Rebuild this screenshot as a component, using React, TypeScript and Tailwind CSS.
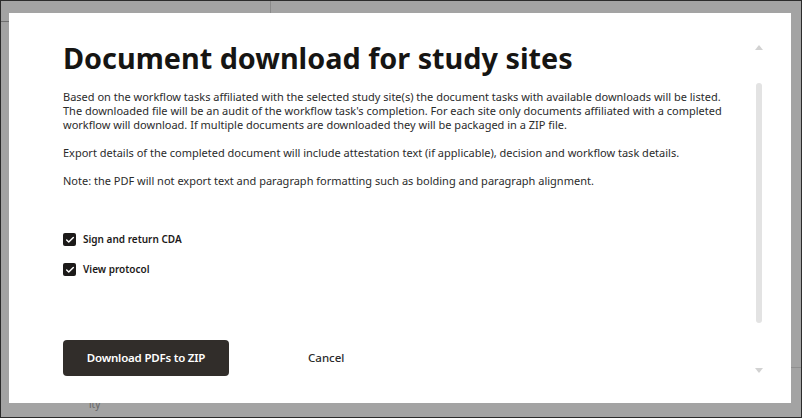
import { Check } from 'lucide-react';

const font = { fontFamily: '"Noto Sans", "Open Sans", Arial, sans-serif' };

const paragraphs = [
  "Based on the workflow tasks affiliated with the selected study site(s) the document tasks with available downloads will be listed. The downloaded file will be an audit of the workflow task's completion. For each site only documents affiliated with a completed workflow will download. If multiple documents are downloaded they will be packaged in a ZIP file.",
  'Export details of the completed document will include attestation text (if applicable), decision and workflow task details.',
  'Note: the PDF will not export text and paragraph formatting such as bolding and paragraph alignment.',
];

const tasks = ['Sign and return CDA', 'View protocol'];

function Scrollbar() {
  return (
    <div className="flex h-full w-[12px] flex-col items-center pt-[32px] pb-[30px]">
      <div className="h-0 w-0 border-x-[4px] border-b-[5px] border-x-transparent border-b-[#d2d2d2]" />
      <div className="mt-[33px] w-[6px] flex-1 rounded-full bg-[#e3e3e3]" />
      <div className="mt-[45px] h-0 w-0 border-x-[4px] border-t-[5px] border-x-transparent border-t-[#d2d2d2]" />
    </div>
  );
}

export default function App() {
  return (
    <div
      className="relative h-[418px] w-[802px] overflow-hidden border border-[#2b2b2b] bg-[#a3a3a3] pl-[8px] pt-[12px]"
      style={font}
    >
      {/* page behind the overlay */}
      <div className="absolute left-0 top-[20px] h-px w-[9px] bg-[#6e6e6e]" />
      <div className="absolute left-[269px] top-0 h-[12px] w-px bg-[#8a8a8a]" />
      <div className="absolute right-0 top-[366px] h-px w-[10px] bg-[#8f8f8f]" />
      <span className="absolute left-[88px] top-[396px] text-[10px] text-[#666]">ity</span>

      <div className="relative flex h-[390px] w-[782px] bg-white">
        <div className="flex flex-1 flex-col pl-[54px] pr-[30px] pt-[26px]">
          <h1 className="text-[28.8px] font-bold leading-[38px] text-[#161513]">
            Document download for study sites
          </h1>
          <div className="mt-[13px] flex flex-col gap-[14px] text-[11px] leading-[14px] text-[#2b2b2b]">
            {paragraphs.map((p) => (
              <p key={p}>{p}</p>
            ))}
          </div>

          <div className="mt-[45px] flex flex-col gap-[17px]">
            {tasks.map((t) => (
              <label key={t} className="flex items-center gap-[7px]">
                <span className="flex h-[13px] w-[13px] items-center justify-center rounded-[2px] bg-[#1c1a19]">
                  <Check size={10} strokeWidth={3.5} className="text-white" />
                </span>
                <span className="text-[10px] font-semibold leading-[13px] text-[#1c1a19]">{t}</span>
              </label>
            ))}
          </div>

          <div className="mt-auto mb-[27px] flex items-center gap-[79px]">
            <button className="h-[36px] w-[166px] rounded-[4px] bg-[#312d2a] text-[11.5px] font-semibold tracking-[-0.2px] text-white">
              Download PDFs to ZIP
            </button>
            <button className="text-[11.5px] font-medium text-[#2b2b2b]">Cancel</button>
          </div>
        </div>
        <div className="pr-[26px]">
          <Scrollbar />
        </div>
      </div>
    </div>
  );
}
